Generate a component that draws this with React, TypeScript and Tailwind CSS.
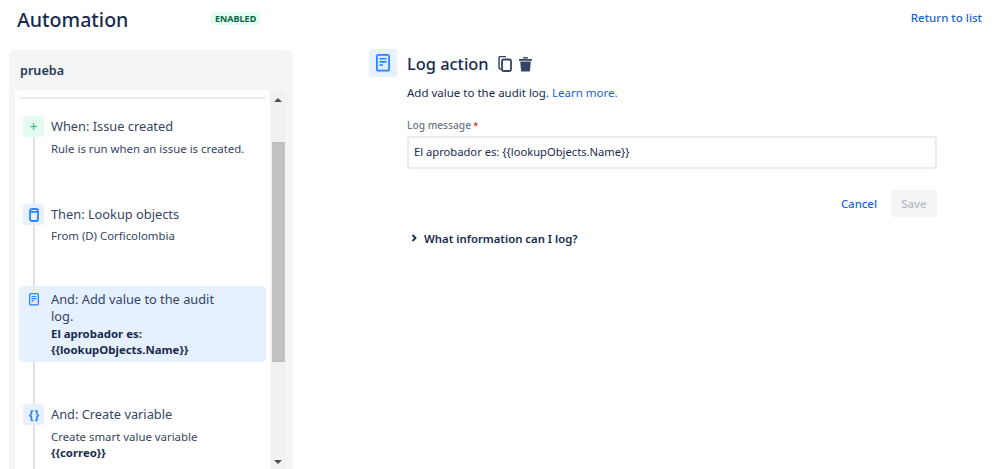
import React from "react";

const LogIcon = ({ size = 14 }: { size?: number }) => (
  <svg width={size} height={size * 1.25} viewBox="0 0 16 20" fill="none">
    <rect x="1" y="1" width="14" height="18" rx="2" fill="#DEEBFF" stroke="#2684FF" strokeWidth="2" />
    <path d="M4 5.5h8M4 9h8M4 12.5h4" stroke="#2684FF" strokeWidth="1.8" />
  </svg>
);

const DbIcon = () => (
  <svg width="10" height="14" viewBox="0 0 10 14" fill="none" stroke="#2684FF" strokeWidth="1.8">
    <rect x="1" y="1" width="8" height="12" rx="2" />
    <path d="M1 3.8h8" />
  </svg>
);

const Tile = ({ className, children }: { className: string; children: React.ReactNode }) => (
  <div className={`w-[21px] h-[21px] rounded-[3px] flex items-center justify-center shrink-0 ${className}`}>{children}</div>
);

const Line = ({ className = "" }: { className?: string }) => <div className={`w-[2px] bg-[#dfe1e6] ${className}`} />;

function Sidebar() {
  return (
    <div className="w-[284px] ml-[9px] mt-[10px] bg-[#f4f5f7] rounded-t-[6px] flex flex-col pl-[6px] pr-2 h-[419px]">
      <div className="h-10 pl-[5px] flex items-center pt-[3px] text-[12.6px] font-semibold text-[#253858]">prueba</div>
      <div className="flex flex-1 min-h-0">
        <div className="w-[256px] bg-white rounded-t-[4px] pl-1 pr-[4px] pt-[7px] overflow-hidden">
          <div className="h-[2px] bg-[#ebecf0]" />
          <div className="pl-1 pt-[17px]">
            <div className="flex gap-[7px] h-[88px]">
              <div className="flex flex-col items-center">
                <Tile className="bg-[#e3fcef] text-[#36b37e] text-[14px] leading-none">+</Tile>
                <Line className="flex-1" />
              </div>
              <div className="text-[#344563]">
                <div className="text-[12.8px] leading-[20px]">When: Issue created</div>
                <div className="text-[11.4px] leading-[16px] mt-[5px]">Rule is run when an issue is created.</div>
              </div>
            </div>
            <div className="flex gap-[7px] h-[82px]">
              <div className="flex flex-col items-center">
                <Tile className="bg-[#e6f0ff]"><DbIcon /></Tile>
                <Line className="flex-1" />
              </div>
              <div className="text-[#344563]">
                <div className="text-[12.8px] leading-[20px]">Then: Lookup objects</div>
                <div className="text-[11.4px] leading-[16px] mt-[4px]">From (D) Corficolombia</div>
              </div>
            </div>
          </div>
          <div className="h-[76px] bg-[#e6f0ff] rounded-[4px] flex gap-[7px] pl-[4px] pr-10 pt-[5px]">
            <div className="w-[21px] flex justify-center pt-[2px] shrink-0"><LogIcon size={10} /></div>
            <div className="text-[#344563]">
              <div className="text-[12.8px] leading-[17px]">And: Add value to the audit log.</div>
              <div className="text-[11.4px] leading-[16px] font-bold text-[#172b4d] mt-[1px]">El aprobador es: {"{{lookupObjects.Name}}"}</div>
            </div>
          </div>
          <div className="pl-1">
            <Line className="h-[42px] ml-[10px]" />
            <div className="flex gap-[7px]">
              <div className="flex flex-col items-center">
                <Tile className="bg-[#e6f0ff] text-[#2684ff] text-[12px] font-bold leading-none tracking-[-1px]">{"{ }"}</Tile>
                <Line className="h-12" />
              </div>
              <div className="text-[#344563]">
                <div className="text-[12.8px] leading-[20px]">And: Create variable</div>
                <div className="text-[11.4px] leading-[16px] mt-[5px]">Create smart value variable</div>
                <div className="text-[11.4px] leading-[16px] font-bold text-[#172b4d]">{"{{correo}}"}</div>
              </div>
            </div>
          </div>
        </div>
        <div className="w-[14px] ml-px bg-[#f1f1f1] flex flex-col items-center">
          <div className="h-[17px] shrink-0 flex items-center justify-center pt-[2px]">
            <div className="w-0 h-0 border-x-[4px] border-x-transparent border-b-[4px] border-b-[#505050]" />
          </div>
          <div className="mt-[35px] h-[220px] w-[13px] bg-[#c1c1c1] shrink-0" />
          <div className="flex-1" />
          <div className="h-[14px] shrink-0 flex items-center justify-center">
            <div className="w-0 h-0 border-x-[4px] border-x-transparent border-t-[4px] border-t-[#505050]" />
          </div>
        </div>
      </div>
    </div>
  );
}

function Editor() {
  return (
    <div className="ml-[76px] mt-[9px] flex gap-[10px] items-start">
      <div className="w-7 h-7 bg-[#e6f0ff] rounded-[3px] flex items-center justify-center shrink-0">
        <LogIcon size={14} />
      </div>
      <div className="w-[530px]">
        <div className="h-[28px] flex items-center pt-px">
          <span className="text-[16.4px] font-medium text-[#172b4d] leading-[28px]">Log action</span>
          <svg className="ml-[9px]" width="14" height="16" viewBox="0 0 14 16" fill="none" stroke="#344563" strokeWidth="1.5">
            <path d="M3 13H2.5A1.5 1.5 0 0 1 1 11.5V2a1.5 1.5 0 0 1 1.5-1.5H8" />
            <rect x="4" y="3.5" width="9" height="11.5" rx="1.5" strokeWidth="1.8" />
          </svg>
          <svg className="ml-[6px]" width="15" height="16" viewBox="0 0 15 16" fill="#344563">
            <path d="M1 3h13v1.8H1zM5.5 1h4l.7 1.5H4.8zM2.2 5.6h10.6l-.8 9a1 1 0 0 1-1 .9H4a1 1 0 0 1-1-.9z" />
          </svg>
        </div>
        <p className="text-[11.5px] leading-4 text-[#172b4d] mt-[8px]">
          Add value to the audit log. <span className="text-[#1a5fd6]">Learn more.</span>
        </p>
        <div className="text-[10.2px] leading-[13px] text-[#6b778c] mt-[18px] font-medium">
          Log message<span className="text-[#bf2600] text-[9px]"> *</span>
        </div>
        <div className="h-[33px] mt-[4px] border-2 border-[#ebecf0] rounded-[3px] flex items-center pl-[5px] text-[11.2px] text-[#172b4d]">
          {"El aprobador es: {{lookupObjects.Name}}"}
        </div>
        <div className="flex justify-end items-center mt-[21px] gap-[14px]">
          <span className="text-[11.4px] font-medium text-[#1a5fd6]">Cancel</span>
          <div className="w-[46px] h-[27px] bg-[#f4f5f7] rounded-[3px] flex items-center justify-center text-[11.4px] font-medium text-[#b3bac5]">Save</div>
        </div>
        <div className="flex items-center mt-[13px] h-4">
          <svg width="7" height="8" viewBox="0 0 7 8" fill="none" stroke="#172b4d" strokeWidth="1.8" className="ml-[4px]">
            <path d="M1.5 1l3 3-3 3" />
          </svg>
          <span className="ml-[6px] text-[11.35px] font-semibold text-[#172b4d]">What information can I log?</span>
        </div>
      </div>
    </div>
  );
}

export default function App() {
  return (
    <div className="w-[999px] h-[469px] bg-white overflow-hidden font-['Noto_Sans','Open_Sans',sans-serif]">
      <header className="h-10 flex items-center pl-[17px] pr-[17px]">
        <h1 className="text-[19.6px] font-medium text-[#172b4d] w-[194px]">Automation</h1>
        <span className="px-[4px] h-[13px] -mt-1 bg-[#e3fcef] rounded-[3px] text-[9px] leading-[13px] font-bold text-[#006644]">ENABLED</span>
        <span className="ml-auto text-[11.5px] font-medium text-[#1a5fd6] -mt-1">Return to list</span>
      </header>
      <div className="flex items-start">
        <Sidebar />
        <Editor />
      </div>
    </div>
  );
}
